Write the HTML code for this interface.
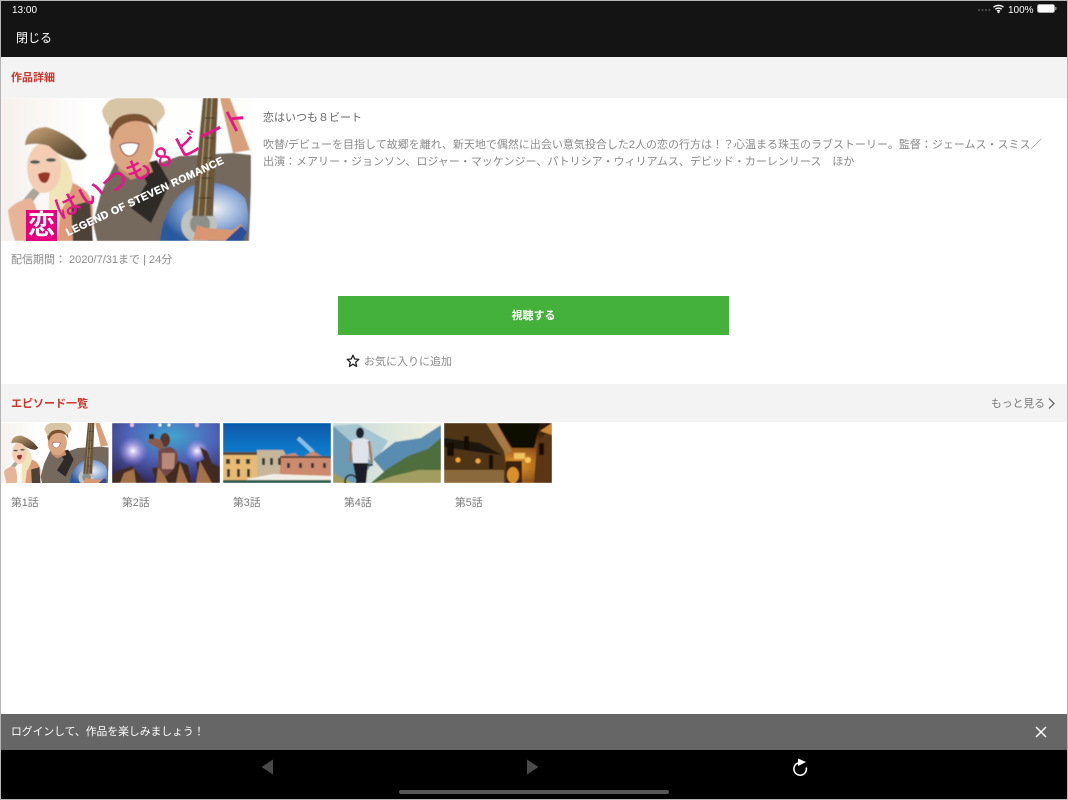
<!DOCTYPE html>
<html lang="ja"><head><meta charset="utf-8"><title>作品詳細</title>
<style>
*{box-sizing:border-box}
html,body{margin:0;padding:0;width:1068px;height:800px;overflow:hidden;background:#fff;font-family:"Liberation Sans","Noto Sans CJK JP",sans-serif}
.a{position:absolute;white-space:nowrap}
#frame{position:absolute;left:0;top:0;width:1068px;height:800px;border:1px solid #b5b5b5;pointer-events:none}
.ep{font-size:10.800px;line-height:15px;color:#777;top:496px}
.h{font-size:11px;line-height:14px;font-weight:bold;color:#c9352b}
</style></head><body>
<div class="a" style="left:0;top:0;width:1068px;height:57px;background:#141414"></div>
<div class="a" style="left:12px;top:3px;margin-top:0;padding-top:0;font-size:10px;line-height:12px;color:#fff;display:none"></div>
<div class="a" style="left:12px;top:5px;font-size:10px;line-height:12px;color:#fff">13:00</div>
<svg class="a" style="left:976px;top:3px" width="84" height="12" viewBox="0 0 84 12">
<g fill="#555"><circle cx="3" cy="7" r="1"/><circle cx="6.500" cy="7" r="1"/><circle cx="10" cy="7" r="1"/><circle cx="13.500" cy="7" r="1"/></g>
<path d="M17.500 4.200a8 8 0 0 1 10 0M19.300 6.200a5 5 0 0 1 6.400 0M21 8.100a2.400 2.400 0 0 1 3 0" fill="none" stroke="#fff" stroke-width="1.400"/><circle cx="22.500" cy="9.300" r="1" fill="#fff"/>
<text x="32" y="10" font-size="10" fill="#fff" font-family="Liberation Sans">100%</text>
<rect x="61.500" y="1.500" width="17" height="8" rx="2" fill="#fff" stroke="#aaa"/><rect x="79" y="4" width="1.500" height="3" fill="#888"/></svg>
<div class="a" style="left:16px;top:30px;font-size:12px;line-height:16px;color:#fff">閉じる</div>

<div class="a" style="left:0;top:57px;width:1068px;height:41px;background:#f3f3f3"></div>
<div class="a h" style="left:11px;top:71px">作品詳細</div>

<svg class="a" style="left:1px;top:98px" width="251" height="143" viewBox="0 0 251 143">
<defs>
<filter id="soft"><feGaussianBlur stdDeviation=".5"/></filter>
<linearGradient id="g1" x1="0" x2="1"><stop offset="0" stop-color="#f5f1ed"/><stop offset=".35" stop-color="#fff"/><stop offset="1" stop-color="#fdfdfc"/></linearGradient>
<radialGradient id="blue" cx=".62" cy=".45" r=".62"><stop offset="0" stop-color="#eef2f7"/><stop offset=".55" stop-color="#89a6d4"/><stop offset="1" stop-color="#2b5a9e"/></radialGradient>
<linearGradient id="hat" x1="0" x2="1" y1="0" y2="1"><stop offset="0" stop-color="#cfa87a"/><stop offset=".7" stop-color="#67543a"/><stop offset="1" stop-color="#4b3d2b"/></linearGradient>
<g id="art" filter="url(#soft)">
<rect width="251" height="143" fill="url(#g1)"/>
<path d="M96 143L92 125 100 95 115 63 145 70 178 58 232 55 250 57V89L248 143Z" fill="#75695d"/>
<path d="M136 67L156 62 169 85 150 125 130 110 146 85Z" fill="#2d2925"/>
<path d="M159 143Q163 105 190 88 222 78 244 100 251 122 243 143Z" fill="url(#blue)"/>
<ellipse cx="198" cy="127" rx="18" ry="18" fill="#bfc3bc"/><ellipse cx="199" cy="126" rx="10" ry="10" fill="#8e8f88"/>
<path d="M202 0H217L212 118H191Z" fill="#6b563a"/><path d="M206 0L197 118M211 0L204 118" stroke="#bba97f" stroke-width="1"/><path d="M204 20H214M203 40H213M202 60H212M200 80H211M198 100H210" stroke="#3f3424" stroke-width="1"/>
<path d="M219 0H229L249 52 232 55Z" fill="#d7a07a"/>
<path d="M192 142L196 127 205 130 232 132 240 126 244 135 236 143Z" fill="#d89673"/><path d="M224 143L240 128 246 134 240 143Z" fill="#2b4d95"/>
<path d="M120 55H145L152 74 130 82 117 72Z" fill="#c98f6d"/>
<ellipse cx="131" cy="46" rx="22" ry="29" fill="#dba682"/>
<path d="M108 36Q106 12 132 10 158 11 156 36 152 24 135 23 115 24 112 42Z" fill="#7b5230"/>
<path d="M101 13Q106 0 118 0H150Q164 3 164 16 156 27 153 28 146 14 130 16 114 17 110 30 102 22 101 13Z" fill="#d8c5a6"/>
<path d="M119 47Q128 43 138 46 135 58 128 58 121 57 119 47Z" fill="#fff" stroke="#843a2d"/>
<path d="M56 143Q52 105 72 85 90 92 92 110L91 143Z" fill="#dc9a78"/><path d="M70 108L89 103 92 143H72Z" fill="#4d4338"/>
<path d="M50 52Q70 60 72 85 66 105 60 112L56 143H48V100Z" fill="#f0e4b9"/>
<ellipse cx="43" cy="70" rx="17" ry="25" fill="#f3ceb4"/>
<path d="M24 47Q25 30 45 29 70 36 86 57 84 63 75 62 60 60 48 48 36 44 24 47Z" fill="url(#hat)"/>
<path d="M37 76Q43 73 49 75 48 85 43 85 38 84 37 76Z" fill="#9a3529"/>
<ellipse cx="34" cy="64" rx="5" ry="1.800" fill="#525a55"/><ellipse cx="50" cy="62" rx="5" ry="1.800" fill="#525a55"/>
<path d="M9 118L32 90 39 95 14 125Z" fill="#aaa597"/>
<path d="M7 112Q16 102 30 100 40 112 36 143H14Q8 125 7 112Z" fill="#e8b497"/>
</g>
</defs>
<use href="#art"/>
<rect x="25" y="112" width="31" height="31" fill="#e3007f"/>
<text x="27" y="136" font-size="27" font-weight="bold" fill="#fff" font-family="Noto Sans CJK JP">恋</text>
<text transform="translate(59 122) rotate(-27)" font-size="26" fill="#e3178a" font-weight="500" font-family="Noto Sans CJK JP" letter-spacing=".6">はいつも 8 ビート</text>
<text transform="translate(67 138) rotate(-25)" font-size="10.500" fill="#fff" stroke="#fff" stroke-width=".3" font-weight="bold" font-family="Liberation Sans" letter-spacing=".4">LEGEND OF STEVEN ROMANCE</text>
</svg>

<div class="a" style="left:263px;top:111px;font-size:11px;line-height:15px;color:#666">恋はいつも８ビート</div>
<div class="a" style="left:263px;top:137px;width:790px;white-space:normal;font-size:11px;line-height:17px;color:#8a8a8a">吹替/デビューを目指して故郷を離れ、新天地で偶然に出会い意気投合した2人の恋の行方は！？心温まる珠玉のラブストーリー。監督：ジェームス・スミス／<br>出演：メアリー・ジョンソン、ロジャー・マッケンジー、パトリシア・ウィリアムス、デビッド・カーレンリース　ほか</div>
<div class="a" style="left:11px;top:253px;font-size:11px;line-height:14px;color:#8a8a8a">配信期間： 2020/7/31まで | 24分</div>

<div class="a" style="left:338px;top:296px;width:391px;height:39px;background:#43b13a;color:#fff;font-size:11px;font-weight:bold;line-height:41px;text-align:center">視聴する</div>
<svg class="a" style="left:346px;top:354px" width="14" height="14" viewBox="0 0 14 14"><path d="M7 1.200L8.700 5 12.800 5.400 9.700 8.200 10.600 12.400 7 10.200 3.400 12.400 4.300 8.200 1.200 5.400 5.300 5Z" fill="none" stroke="#222" stroke-width="1.300" stroke-linejoin="round"/></svg>
<div class="a" style="left:364px;top:355px;font-size:11px;line-height:15px;color:#8a8a8a">お気に入りに追加</div>

<div class="a" style="left:0;top:384px;width:1068px;height:38px;background:#f3f3f3"></div>
<div class="a h" style="left:11px;top:397px">エピソード一覧</div>
<div class="a" style="left:991px;top:397px;font-size:10.800px;line-height:14px;color:#777">もっと見る</div>
<svg class="a" style="left:1047px;top:397px" width="9" height="13" viewBox="0 0 9 13"><path d="M2 1.500L7 6.500 2 11.500" fill="none" stroke="#555" stroke-width="1.200"/></svg>

<svg class="a" style="left:1px;top:423px" width="108" height="60" viewBox="0 0 251 139.500"><use href="#art"/></svg>

<svg class="a" style="left:112px;top:423px" width="108" height="60" viewBox="0 0 108 60">
<defs><radialGradient id="c" cx=".55" cy=".22" r=".8"><stop offset="0" stop-color="#3fa6cf"/><stop offset=".5" stop-color="#4f64b8"/><stop offset="1" stop-color="#31285f"/></radialGradient>
<radialGradient id="l"><stop offset="0" stop-color="#fff"/><stop offset=".3" stop-color="#d8c8f5" stop-opacity=".8"/><stop offset="1" stop-color="#9d7fe0" stop-opacity="0"/></radialGradient></defs>
<g filter="url(#soft)"><rect width="108" height="60" fill="url(#c)"/><circle cx="21" cy="28" r="15" fill="url(#l)"/><circle cx="85" cy="28" r="12" fill="url(#l)"/>
<circle cx="20" cy="2" r="2" fill="#e8c0e0"/><circle cx="48" cy="2" r="1.500" fill="#fff"/><circle cx="57" cy="2" r="1.500" fill="#fff"/><circle cx="85" cy="2" r="2" fill="#e8c0e0"/>
<path d="M46 60L46 28Q50 24 58 24 65 26 66 34L64 60Z" fill="#6f4a46"/><path d="M50 30H63L62 46H50Z" fill="#b98a78"/><ellipse cx="53" cy="17" rx="5" ry="7" fill="#56382f"/><path d="M35 19L39 14 49 17 52 24 48 27Z" fill="#8a5d4c"/><rect x="37" y="11" width="5" height="5" fill="#222"/>
<path d="M0 60V52L8 47 20 43 26 50 34 60H44L40 45 47 44 52 55 60 48 66 38 76 42 80 60H88L84 40 92 36 88 24 95 28 100 40 108 44V60Z" fill="#3f2a24"/>
<path d="M8 60L12 50 22 46 24 60ZM44 60L46 44 52 52 56 60ZM64 60L68 40 76 60ZM84 60L88 38 100 60Z" fill="#a47249"/></g></svg>

<svg class="a" style="left:223px;top:423px" width="108" height="60" viewBox="0 0 108 60">
<defs><linearGradient id="s" x1="0" y1="0" x2="0" y2="1"><stop offset="0" stop-color="#0659a8"/><stop offset=".5" stop-color="#0f7ccc"/><stop offset="1" stop-color="#2f9fe0"/></linearGradient></defs>
<g filter="url(#soft)"><rect width="108" height="60" fill="url(#s)"/><path d="M75 15L90 29" stroke="#bfe0f5" stroke-width="4" stroke-opacity=".7"/>
<path d="M0 29H34V60H0Z" fill="#e8bb74"/><path d="M34 27H60L62 30V60H34Z" fill="#c6b79a"/><path d="M57 33L72 30 78 35 90 28 100 34 108 36V60H57Z" fill="#cc8a6e"/><path d="M0 29H34V32H0ZM57 33H108V35H57Z" fill="#5a4c3a"/>
<g fill="#3d3a34"><rect x="3" y="36" width="4" height="5"/><rect x="13" y="36" width="4" height="5"/><rect x="23" y="36" width="4" height="5"/><rect x="4" y="46" width="3" height="8"/><rect x="14" y="46" width="3" height="8"/><rect x="24" y="46" width="3" height="8"/><rect x="39" y="35" width="3" height="7"/><rect x="47" y="35" width="3" height="7"/><rect x="55" y="35" width="3" height="7"/><rect x="64" y="40" width="3" height="5"/><rect x="76" y="40" width="3" height="5"/><rect x="88" y="40" width="3" height="5"/><rect x="100" y="40" width="3" height="5"/></g>
<path d="M24 56L50 51 108 53V57H24Z" fill="#f1eee7"/><rect y="57" width="108" height="3" fill="#2f5b50"/></g></svg>

<svg class="a" style="left:333px;top:423px" width="108" height="60" viewBox="0 0 108 60">
<defs><linearGradient id="m" x1="0" y1="0" x2="1" y2="0"><stop offset="0" stop-color="#c7dcdc"/><stop offset="1" stop-color="#f0efdd"/></linearGradient></defs>
<g filter="url(#soft)"><rect width="108" height="60" fill="url(#m)"/>
<path d="M0 3L25 1 55 18 45 34 0 40Z" fill="#a4c5d2"/><path d="M0 3Q20 20 40 40L25 60H0Z" fill="#6a9ab4"/><path d="M40 36L62 19 88 15 108 2V26L70 38 52 50Z" fill="#5a8cb2"/>
<path d="M38 60L54 46 75 33 95 26 108 15V60Z" fill="#4f6e3e"/><path d="M0 50L20 60H0ZM40 60L60 53 85 47 108 47V60Z" fill="#a19c60"/>
<ellipse cx="27" cy="10" rx="4" ry="5.500" fill="#20232a"/><path d="M18 18Q27 13 36 17L35 40H20Z" fill="#dfe4ea"/><path d="M20 40H35L33 60H24Z" fill="#1e1f26"/><path d="M36 18L39 40" stroke="#a87a5c" stroke-width="2.500"/><path d="M18 19L17 40" stroke="#a87a5c" stroke-width="2.500"/><path d="M28 42H40" stroke="#222" stroke-width="1.500"/><circle cx="18" cy="58" r="6" fill="none" stroke="#222" stroke-width="1.500"/></g></svg>

<svg class="a" style="left:444px;top:423px" width="108" height="60" viewBox="0 0 108 60">
<defs><radialGradient id="w" cx=".65" cy=".7" r=".65"><stop offset="0" stop-color="#e99a2a"/><stop offset=".6" stop-color="#7a4216"/><stop offset="1" stop-color="#2b1608"/></radialGradient></defs>
<g filter="url(#soft)"><rect width="108" height="60" fill="url(#w)"/>
<path d="M53 0H96L90 25H68Z" fill="#0d0703"/><path d="M35 0H53L68 28 58 32Z" fill="#a67a45"/><path d="M0 0H42L60 28 65 60H0Z" fill="#4f3419"/><path d="M0 15L36 20 58 32 40 30 0 24Z" fill="#1e130a"/>
<path d="M0 47H60V60H0Z" fill="#8a6a3d"/><path d="M90 60L93 22 108 0V60Z" fill="#5a3514"/><path d="M96 8L108 0V12Z" fill="#d08a35"/>
<rect x="70" y="30" width="11" height="6" fill="#f0c35c"/><path d="M62 38H78V60H62Z" fill="#3b240c"/><ellipse cx="69" cy="52" rx="6" ry="8" fill="#d9902c"/>
<circle cx="14" cy="37" r="2.500" fill="#f4a73b"/><circle cx="34" cy="38" r="2.500" fill="#f4a73b"/><circle cx="84" cy="37" r="3" fill="#ffc659"/>
<g fill="#160c05"><rect x="3" y="20" width="7" height="13"/><rect x="20" y="13" width="5" height="14"/><rect x="45" y="32" width="4" height="14"/><rect x="95" y="20" width="5" height="12"/></g></g></svg>

<div class="a ep" style="left:11px">第1話</div>
<div class="a ep" style="left:122px">第2話</div>
<div class="a ep" style="left:233px">第3話</div>
<div class="a ep" style="left:344px">第4話</div>
<div class="a ep" style="left:455px">第5話</div>

<div class="a" style="left:0;top:714px;width:1068px;height:36px;background:#666"></div>
<div class="a" style="left:11px;top:725px;font-size:10.800px;line-height:15px;color:#fff">ログインして、作品を楽しみましょう！</div>
<svg class="a" style="left:1034px;top:725px" width="14" height="14" viewBox="0 0 14 14"><path d="M2 2L12 12M12 2L2 12" stroke="#fff" stroke-width="1.500"/></svg>

<div class="a" style="left:0;top:750px;width:1068px;height:50px;background:#000"></div>
<svg class="a" style="left:260px;top:759px" width="14" height="16" viewBox="0 0 14 16"><path d="M13 0.500V15.500L1.500 8Z" fill="#4a4a4a"/></svg>
<svg class="a" style="left:526px;top:759px" width="14" height="16" viewBox="0 0 14 16"><path d="M1 0.500V15.500L12.500 8Z" fill="#4a4a4a"/></svg>
<svg class="a" style="left:790px;top:757px" width="20" height="20" viewBox="0 0 20 20"><path d="M8 6A6.300 6.300 0 1 0 16.300 10.500" fill="none" stroke="#fff" stroke-width="1.500"/><path d="M8 1.500L16 5 8 9Z" fill="#fff"/></svg>
<div class="a" style="left:399px;top:790px;width:270px;height:4px;border-radius:2px;background:#555"></div>
<div id="frame"></div>
</body></html>
